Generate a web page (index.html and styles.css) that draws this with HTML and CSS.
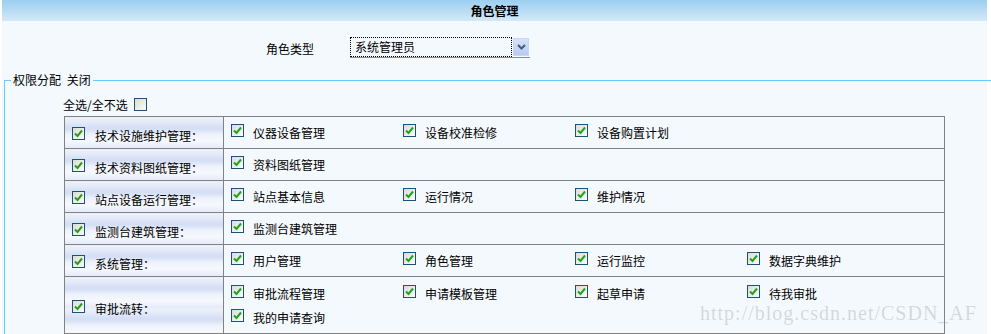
FILE: index.html
```html
<!DOCTYPE html>
<html>
    <head>
        <meta charset="utf-8">
        <title>角色管理</title>
        <link rel="stylesheet" href="styles.css">
    </head>
    <body>
        <div class="page">
            <div class="title">角色管理</div>
            <div class="panel">
                <div class="role-row">
                    <span class="role-label">角色类型</span>
                    <div class="select">
                        <span class="select-text">系统管理员</span>
                        <span class="select-btn">
                            <svg width="9" height="6" viewBox="0 0 9 6"><path d="M1 1 L4.5 4.5 L8 1" fill="none" stroke="#4a5a78" stroke-width="2"/></svg>
                        </span>
                    </div>
                </div>
                <fieldset class="rights">
                    <legend>权限分配 关闭</legend>
                    <div class="select-all">全选/全不选 <span class="cb"></span></div>
                    <table class="perm">
                        <tr>
                            <td class="group"><span class="cb on"><svg viewBox="0 0 11 11"><path d="M2 5.5 L4.5 8 L9 2.5"/></svg></span><span class="group-name">技术设施维护管理：</span></td>
                            <td class="items"><div class="item-list">
                                <div class="item"><span class="cb on"><svg viewBox="0 0 11 11"><path d="M2 5.5 L4.5 8 L9 2.5"/></svg></span>仪器设备管理</div>
                                <div class="item"><span class="cb on"><svg viewBox="0 0 11 11"><path d="M2 5.5 L4.5 8 L9 2.5"/></svg></span>设备校准检修</div>
                                <div class="item"><span class="cb on"><svg viewBox="0 0 11 11"><path d="M2 5.5 L4.5 8 L9 2.5"/></svg></span>设备购置计划</div>
                            </div></td>
                        </tr>
                        <tr>
                            <td class="group"><span class="cb on"><svg viewBox="0 0 11 11"><path d="M2 5.5 L4.5 8 L9 2.5"/></svg></span><span class="group-name">技术资料图纸管理：</span></td>
                            <td class="items"><div class="item-list">
                                <div class="item"><span class="cb on"><svg viewBox="0 0 11 11"><path d="M2 5.5 L4.5 8 L9 2.5"/></svg></span>资料图纸管理</div>
                            </div></td>
                        </tr>
                        <tr>
                            <td class="group"><span class="cb on"><svg viewBox="0 0 11 11"><path d="M2 5.5 L4.5 8 L9 2.5"/></svg></span><span class="group-name">站点设备运行管理：</span></td>
                            <td class="items"><div class="item-list">
                                <div class="item"><span class="cb on"><svg viewBox="0 0 11 11"><path d="M2 5.5 L4.5 8 L9 2.5"/></svg></span>站点基本信息</div>
                                <div class="item"><span class="cb on"><svg viewBox="0 0 11 11"><path d="M2 5.5 L4.5 8 L9 2.5"/></svg></span>运行情况</div>
                                <div class="item"><span class="cb on"><svg viewBox="0 0 11 11"><path d="M2 5.5 L4.5 8 L9 2.5"/></svg></span>维护情况</div>
                            </div></td>
                        </tr>
                        <tr>
                            <td class="group"><span class="cb on"><svg viewBox="0 0 11 11"><path d="M2 5.5 L4.5 8 L9 2.5"/></svg></span><span class="group-name">监测台建筑管理：</span></td>
                            <td class="items"><div class="item-list">
                                <div class="item"><span class="cb on"><svg viewBox="0 0 11 11"><path d="M2 5.5 L4.5 8 L9 2.5"/></svg></span>监测台建筑管理</div>
                            </div></td>
                        </tr>
                        <tr>
                            <td class="group"><span class="cb on"><svg viewBox="0 0 11 11"><path d="M2 5.5 L4.5 8 L9 2.5"/></svg></span><span class="group-name">系统管理：</span></td>
                            <td class="items"><div class="item-list">
                                <div class="item"><span class="cb on"><svg viewBox="0 0 11 11"><path d="M2 5.5 L4.5 8 L9 2.5"/></svg></span>用户管理</div>
                                <div class="item"><span class="cb on"><svg viewBox="0 0 11 11"><path d="M2 5.5 L4.5 8 L9 2.5"/></svg></span>角色管理</div>
                                <div class="item"><span class="cb on"><svg viewBox="0 0 11 11"><path d="M2 5.5 L4.5 8 L9 2.5"/></svg></span>运行监控</div>
                                <div class="item"><span class="cb on"><svg viewBox="0 0 11 11"><path d="M2 5.5 L4.5 8 L9 2.5"/></svg></span>数据字典维护</div>
                            </div></td>
                        </tr>
                        <tr class="tall">
                            <td class="group"><span class="cb on"><svg viewBox="0 0 11 11"><path d="M2 5.5 L4.5 8 L9 2.5"/></svg></span><span class="group-name">审批流转：</span></td>
                            <td class="items"><div class="item-list">
                                <div class="item"><span class="cb on"><svg viewBox="0 0 11 11"><path d="M2 5.5 L4.5 8 L9 2.5"/></svg></span>审批流程管理</div>
                                <div class="item"><span class="cb on"><svg viewBox="0 0 11 11"><path d="M2 5.5 L4.5 8 L9 2.5"/></svg></span>申请模板管理</div>
                                <div class="item"><span class="cb on"><svg viewBox="0 0 11 11"><path d="M2 5.5 L4.5 8 L9 2.5"/></svg></span>起草申请</div>
                                <div class="item"><span class="cb on"><svg viewBox="0 0 11 11"><path d="M2 5.5 L4.5 8 L9 2.5"/></svg></span>待我审批</div>
                                <div class="item"><span class="cb on"><svg viewBox="0 0 11 11"><path d="M2 5.5 L4.5 8 L9 2.5"/></svg></span>我的申请查询</div>
                            </div></td>
                        </tr>
                    </table>
                </fieldset>
            </div>
            <div class="watermark">http://blog.csdn.net/CSDN_AF</div>
        </div>
    </body>
</html>
```

FILE: styles.css
```css
*{
    font-family: "Noto Sans CJK SC", "Liberation Sans", sans-serif;
    font-size: 12px;
    box-sizing: border-box;
}
body{
    margin: 0;
    background: #fff;
    overflow: hidden;
}
div.page{
    position: relative;
    margin: 0 4px 0 2px;
}
div.title{
    height: 21px;
    line-height: 21px;
    text-align: center;
    font-weight: bold;
    color: #000;
    background: linear-gradient(#9bcff1, #d4e9f8);
}
div.panel{
    background: #f4f9fd;
    padding-top: 16px;
    height: 313px;
}
div.role-row{
    display: flex;
    align-items: center;
    height: 21px;
    padding-left: 264px;
}
span.role-label{
    width: 84px;
    padding-top: 2px;
}
div.select{
    display: flex;
    width: 180px;
    height: 21px;
    border-bottom: 1px solid #8c8c8c;
}
span.select-text{
    flex: 1;
    border: 1px dotted #000;
    padding-left: 4px;
    line-height: 18px;
}
span.select-btn{
    width: 16px;
    height: 18px;
    margin: 1px 1px 0 1px;
    display: flex;
    align-items: center;
    justify-content: center;
    background: linear-gradient(#d6e2fb, #b8cbf4);
    border: 1px solid #c9d6f2;
}
fieldset.rights{
    margin: 15px -4px 0 2px;
    padding: 0;
    border: 1px solid #66ccff;
    border-bottom: none;
    border-right: none;
}
fieldset.rights legend{
    margin-left: 6px;
    padding: 0 2px;
    line-height: 14px;
    word-spacing: 3px;
}
div.select-all{
    display: flex;
    align-items: center;
    height: 16px;
    margin: 9px 0 4px 58px;
}
div.select-all span.cb{
    margin-left: 6px;
}
span.cb{
    display: inline-flex;
    flex-shrink: 0;
    width: 13px;
    height: 13px;
    border: 1px solid #1c5180;
    background: linear-gradient(135deg, #dcdcd6, #fbfbf8);
}
span.cb svg{
    width: 11px;
    height: 11px;
}
span.cb svg path{
    fill: none;
    stroke: #21a221;
    stroke-width: 2;
}
table.perm{
    border-collapse: collapse;
    width: 881px;
    margin-left: 59px;
}
table.perm td{
    border: 1px solid #828282;
    padding: 0;
    height: 32px;
}
table.perm tr.tall td{
    height: 57px;
}
td.group{
    width: 159px;
    padding-left: 7px !important;
    background: linear-gradient(#eef2fb 0%, #e3eaf8 15%, #d2ddf4 35%, #eef2fb 55%, #f6f8fd 75%, #e2e9f8 100%);
    background-size: 100% 31px;
}
td.group span.cb{
    vertical-align: middle;
}
span.group-name{
    vertical-align: middle;
    margin-left: 10px;
    position: relative;
    top: 2px;
}
td.items{
    padding: 0 0 0 7px !important;
}
div.item-list{
    display: flex;
    flex-wrap: wrap;
}
div.item{
    display: flex;
    align-items: center;
    width: 172px;
    height: 24px;
}
div.item span.cb{
    margin: 0 9px 4px 0;
}
div.watermark{
    position: absolute;
    left: 698px;
    top: 302px;
    font-family: "Liberation Serif", serif;
    font-size: 20px;
    letter-spacing: 1px;
    color: rgba(130, 130, 130, 0.28);
}
```
